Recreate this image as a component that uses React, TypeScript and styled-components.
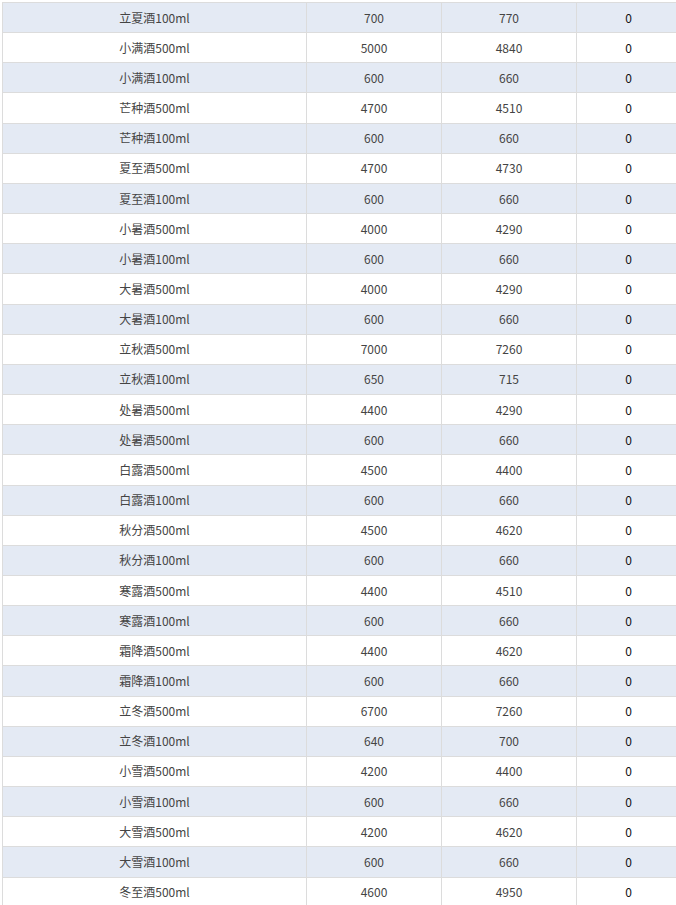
import React from "react";
import styled, { createGlobalStyle } from "styled-components";

const Global = createGlobalStyle`
  html, body { margin: 0; padding: 0; background: #fff; overflow: hidden; }
  body { font-family: "Noto Sans CJK SC", "Noto Sans", sans-serif; }
`;

const Wrap = styled.div`
  width: 676px;
  height: 905px;
  overflow: hidden;
  padding: 2px 0 0 2px;
  box-sizing: border-box;
`;

const Grid = styled.div`
  width: 678px;
  display: flex;
  flex-direction: column;
  font-size: 12px;
`;

const Row = styled.div<{ $striped: boolean }>`
  display: grid;
  grid-template-columns: 304px 135px 135px 104px;
  height: 30.17px;
  box-sizing: border-box;
  border-top: 1px solid #dcdcdc;
  background: ${(p) => (p.$striped ? "#e4eaf4" : "#ffffff")};
`;

const Cell = styled.div<{ $strong?: boolean }>`
  display: flex;
  align-items: center;
  justify-content: center;
  border-left: 1px solid #dcdcdc;
  color: ${(p) => (p.$strong ? "#111" : "#444")};
  white-space: nowrap;
  line-height: 16px;
`;

type Item = [string, number, number, number];

const data: Item[] = [
  ["立夏酒100ml", 700, 770, 0],
  ["小满酒500ml", 5000, 4840, 0],
  ["小满酒100ml", 600, 660, 0],
  ["芒种酒500ml", 4700, 4510, 0],
  ["芒种酒100ml", 600, 660, 0],
  ["夏至酒500ml", 4700, 4730, 0],
  ["夏至酒100ml", 600, 660, 0],
  ["小暑酒500ml", 4000, 4290, 0],
  ["小暑酒100ml", 600, 660, 0],
  ["大暑酒500ml", 4000, 4290, 0],
  ["大暑酒100ml", 600, 660, 0],
  ["立秋酒500ml", 7000, 7260, 0],
  ["立秋酒100ml", 650, 715, 0],
  ["处暑酒500ml", 4400, 4290, 0],
  ["处暑酒500ml", 600, 660, 0],
  ["白露酒500ml", 4500, 4400, 0],
  ["白露酒100ml", 600, 660, 0],
  ["秋分酒500ml", 4500, 4620, 0],
  ["秋分酒100ml", 600, 660, 0],
  ["寒露酒500ml", 4400, 4510, 0],
  ["寒露酒100ml", 600, 660, 0],
  ["霜降酒500ml", 4400, 4620, 0],
  ["霜降酒100ml", 600, 660, 0],
  ["立冬酒500ml", 6700, 7260, 0],
  ["立冬酒100ml", 640, 700, 0],
  ["小雪酒500ml", 4200, 4400, 0],
  ["小雪酒100ml", 600, 660, 0],
  ["大雪酒500ml", 4200, 4620, 0],
  ["大雪酒100ml", 600, 660, 0],
  ["冬至酒500ml", 4600, 4950, 0],
];

export default function App() {
  return (
    <>
      <Global />
      <Wrap>
        <Grid>
          {data.map((d, i) => (
            <Row key={i} $striped={i % 2 === 0}>
              <Cell>{d[0]}</Cell>
              <Cell>{d[1]}</Cell>
              <Cell>{d[2]}</Cell>
              <Cell $strong>{d[3]}</Cell>
            </Row>
          ))}
        </Grid>
      </Wrap>
    </>
  );
}
